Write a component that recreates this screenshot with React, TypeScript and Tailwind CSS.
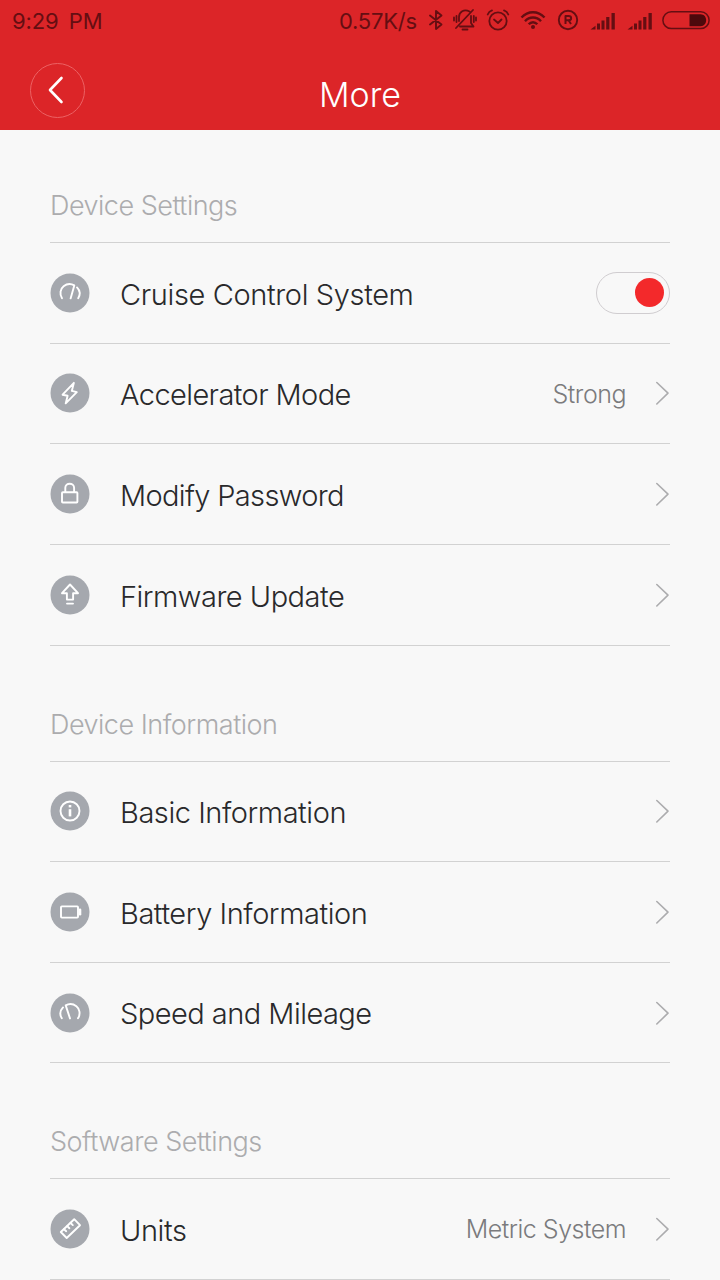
import type { ReactNode } from "react";

const stroke = {
  fill: "none",
  stroke: "currentColor",
  strokeLinecap: "round" as const,
  strokeLinejoin: "round" as const,
};

function Badge({ children }: { children: ReactNode }) {
  return (
    <svg viewBox="0 0 40 40" className="h-10 w-10 shrink-0 text-white" {...stroke} strokeWidth={1.9}>
      <circle cx="20" cy="20" r="19.5" fill="#a5a8ae" stroke="none" />
      {children}
    </svg>
  );
}

const icons: Record<string, ReactNode> = {
  cruise: (
    <>
      <path d="M12 25.2C9.3 21.2 10.3 15.8 13.6 13.2C16.8 10.7 21 10.4 24.3 12.4L20.6 25.4" />
      <path d="M27 14.4C30 17.6 30.3 21.8 28.2 25.2" />
    </>
  ),
  bolt: <path d="M23.9 9.8L12.6 21.7L17.6 22.8L15.7 30.4L26.8 19.1L21.8 17.9Z" />,
  lock: (
    <>
      <rect x="12" y="18.3" width="15.4" height="10.2" rx="0.8" />
      <path d="M15.3 18V13.8C15.3 8.4 24.1 8.4 24.1 13.8V18" />
    </>
  ),
  update: (
    <>
      <path d="M20 9.5L12 18.2H16.9V24.6H23.1V18.2H28Z" />
      <path d="M17 28.6H23" />
    </>
  ),
  info: (
    <>
      <circle cx="20" cy="20" r="9.5" />
      <path d="M20 18.2V25.4" strokeWidth="2.6" strokeLinecap="butt" />
      <path d="M20 14V16.4" strokeWidth="2.6" strokeLinecap="butt" />
    </>
  ),
  battery: (
    <>
      <rect x="11" y="14.4" width="17" height="11.2" rx="0.8" />
      <path d="M30 17.8V22.2" strokeWidth="2.6" />
    </>
  ),
  speed: (
    <>
      <path d="M13 14.4C10 17.6 9.7 21.8 11.8 25.2" />
      <path d="M28 25.2C30.7 21.2 29.7 15.8 26.4 13.2C23.2 10.7 19 10.4 15.7 12.4L20 25.4" />
    </>
  ),
  ruler: (
    <>
      <path d="M24.2 10.2L30 16.2L16.7 29L10.8 23Z" />
      <path d="M14 20.2L16.2 22.2M17.2 17.1L19.4 19.2M20.6 14L22.8 16.1" />
    </>
  ),
};

function Chevron() {
  return (
    <svg viewBox="0 0 16 26" className="h-[26px] w-4 shrink-0 text-[#acacae]" {...stroke} strokeWidth={1.6}>
      <path d="M2.8 2.5L14 13.2L2.8 24" />
    </svg>
  );
}

function Toggle() {
  return (
    <div className="flex h-[42px] w-[74px] items-center justify-end rounded-full border border-[#d0cdd0] pr-[5px]">
      <div className="h-[29px] w-[29px] rounded-full bg-[#f3292b]" />
    </div>
  );
}

type RowProps = { icon: string; label: string; track: string; value?: string; toggle?: boolean };

function Row({ icon, label, track, value, toggle }: RowProps) {
  return (
    <div className="flex h-[100.67px] items-center border-b border-[#d2d2d2]">
      <Badge>{icons[icon]}</Badge>
      <span className={`ml-[30px] mt-[3px] flex-1 text-[29px] font-light ${track}`}>{label}</span>
      {value && <span className="mr-[28px] mt-[2px] text-[25px] font-light tracking-[-0.5px] text-[#7b7b7d]">{value}</span>}
      {toggle ? <Toggle /> : <Chevron />}
    </div>
  );
}

function Heading({ children, first }: { children: string; first?: boolean }) {
  return (
    <h2
      className={`flex items-end border-b border-[#d2d2d2] pb-[16px] text-[27px] leading-[40px] font-light tracking-[-0.5px] text-[#acacae] ${
        first ? "h-[113px]" : "h-[115.9px]"
      }`}
    >
      {children}
    </h2>
  );
}

function Signal() {
  return (
    <svg viewBox="0 0 26 18" className="h-[18px] w-[26px]" fill="currentColor">
      <path d="M0.5 17.5L5.5 13.8V17.5ZM7 11.5H10V17.5H7ZM11.5 8.5H14.5V17.5H11.5ZM16.2 5H19.4V17.5H16.2ZM21.5 1H24.8V17.5H21.5Z" />
    </svg>
  );
}

function StatusBar() {
  return (
    <div className="flex h-10 items-center pl-3 pr-[10px] text-[22px] text-[#650e12]">
      <span className="mt-[2px] flex-1 tracking-[-0.1px] [word-spacing:4px]">9:29 PM</span>
      <span className="mt-[2px] tracking-[-0.2px]">0.57K/s</span>
      <svg viewBox="0 0 16 22" className="ml-[11px] h-[22px] w-4" {...stroke} strokeWidth={1.9}>
        <path d="M2 6.5L13.5 15.5L8 20V2L13.5 6.5L2 15.5" />
      </svg>
      <svg viewBox="0 0 24 24" className="ml-[9px] h-6 w-6" {...stroke} strokeWidth={1.8}>
        <path d="M20 2L3 20M16.5 3.5C11 0.5 6 4 6 9V13M18 8V15L20.5 18.5H7M9.5 21.5H14.5M3.5 8V14M1 9.5V12.5M20.8 8V14M23 9.5V12.5" />
      </svg>
      <svg viewBox="0 0 24 24" className="ml-[9px] h-6 w-6" {...stroke} strokeWidth={1.8}>
        <circle cx="12" cy="13" r="8.7" />
        <path d="M1.7 6.5C2.5 4.3 4 3 6 2.4M22.3 6.5C21.5 4.3 20 3 18 2.4M8 11.5L12 15L15.5 11.5" />
      </svg>
      <svg viewBox="0 0 26 20" className="ml-[10px] h-5 w-[26px]" {...stroke} strokeWidth={2.4} strokeLinecap="butt">
        <path d="M1.5 7.5C8 0.5 18 0.5 24.5 7.5M5 11.2C9.5 6.3 16.5 6.3 21 11.2M8.7 14.3C11.2 11.5 14.8 11.5 17.3 14.3" />
        <circle cx="13" cy="17" r="2" fill="currentColor" stroke="none" />
      </svg>
      <svg viewBox="0 0 22 22" className="ml-[11px] h-[22px] w-[22px]" {...stroke} strokeWidth={1.9}>
        <circle cx="11" cy="11" r="9.2" />
        <path d="M8.5 15V7H11.5C15 7 15 11.3 11.5 11.3H8.5M11.5 11.3L14 15" strokeWidth={2} strokeLinecap="butt" />
      </svg>
      <div className="ml-[11px] mt-[1px] flex gap-[11px]">
        <Signal />
        <Signal />
      </div>
      <svg viewBox="0 0 48 20" className="ml-[9px] h-5 w-12" {...stroke} strokeWidth={1.5}>
        <rect x="0.9" y="1.8" width="46.2" height="16.8" rx="8.4" />
        <path d="M27.5 4.3H38.5C46 4.3 46 16.2 38.5 16.2H27.5Z" fill="#4c090c" stroke="none" />
      </svg>
    </div>
  );
}

export default function App() {
  return (
    <div className="h-[1280px] w-full overflow-hidden bg-[#f8f8f8] font-['Inter','Liberation_Sans',sans-serif] text-[#29292b]">
      <header className="h-[130px] bg-[#dc2528]">
        <StatusBar />
        <div className="grid h-[90px] grid-cols-[1fr_auto_1fr] items-center px-[30px]">
          <button className="mt-[10px] flex h-[55px] w-[55px] items-center justify-center rounded-full border-[1.5px] border-[#ec6264]">
            <svg viewBox="0 0 20 30" className="mr-[3px] h-[30px] w-5 text-white" {...stroke} strokeWidth={2.6}>
              <path d="M15.5 3L4 15L15.5 27" />
            </svg>
          </button>
          <h1 className="mt-[19px] text-[34px] font-light text-white">More</h1>
        </div>
      </header>
      <main className="px-[50px]">
        <Heading first>Device Settings</Heading>
        <Row icon="cruise" label="Cruise Control System" track="tracking-[-0.37px]" toggle />
        <Row icon="bolt" label="Accelerator Mode" track="tracking-[-0.6px]" value="Strong" />
        <Row icon="lock" label="Modify Password" track="tracking-[-0.65px]" />
        <Row icon="update" label="Firmware Update" track="tracking-[-0.5px]" />
        <Heading>Device Information</Heading>
        <Row icon="info" label="Basic Information" track="tracking-[-0.45px]" />
        <Row icon="battery" label="Battery Information" track="tracking-[-0.45px]" />
        <Row icon="speed" label="Speed and Mileage" track="tracking-[-0.53px]" />
        <Heading>Software Settings</Heading>
        <Row icon="ruler" label="Units" track="tracking-[-0.4px]" value="Metric System" />
      </main>
    </div>
  );
}
